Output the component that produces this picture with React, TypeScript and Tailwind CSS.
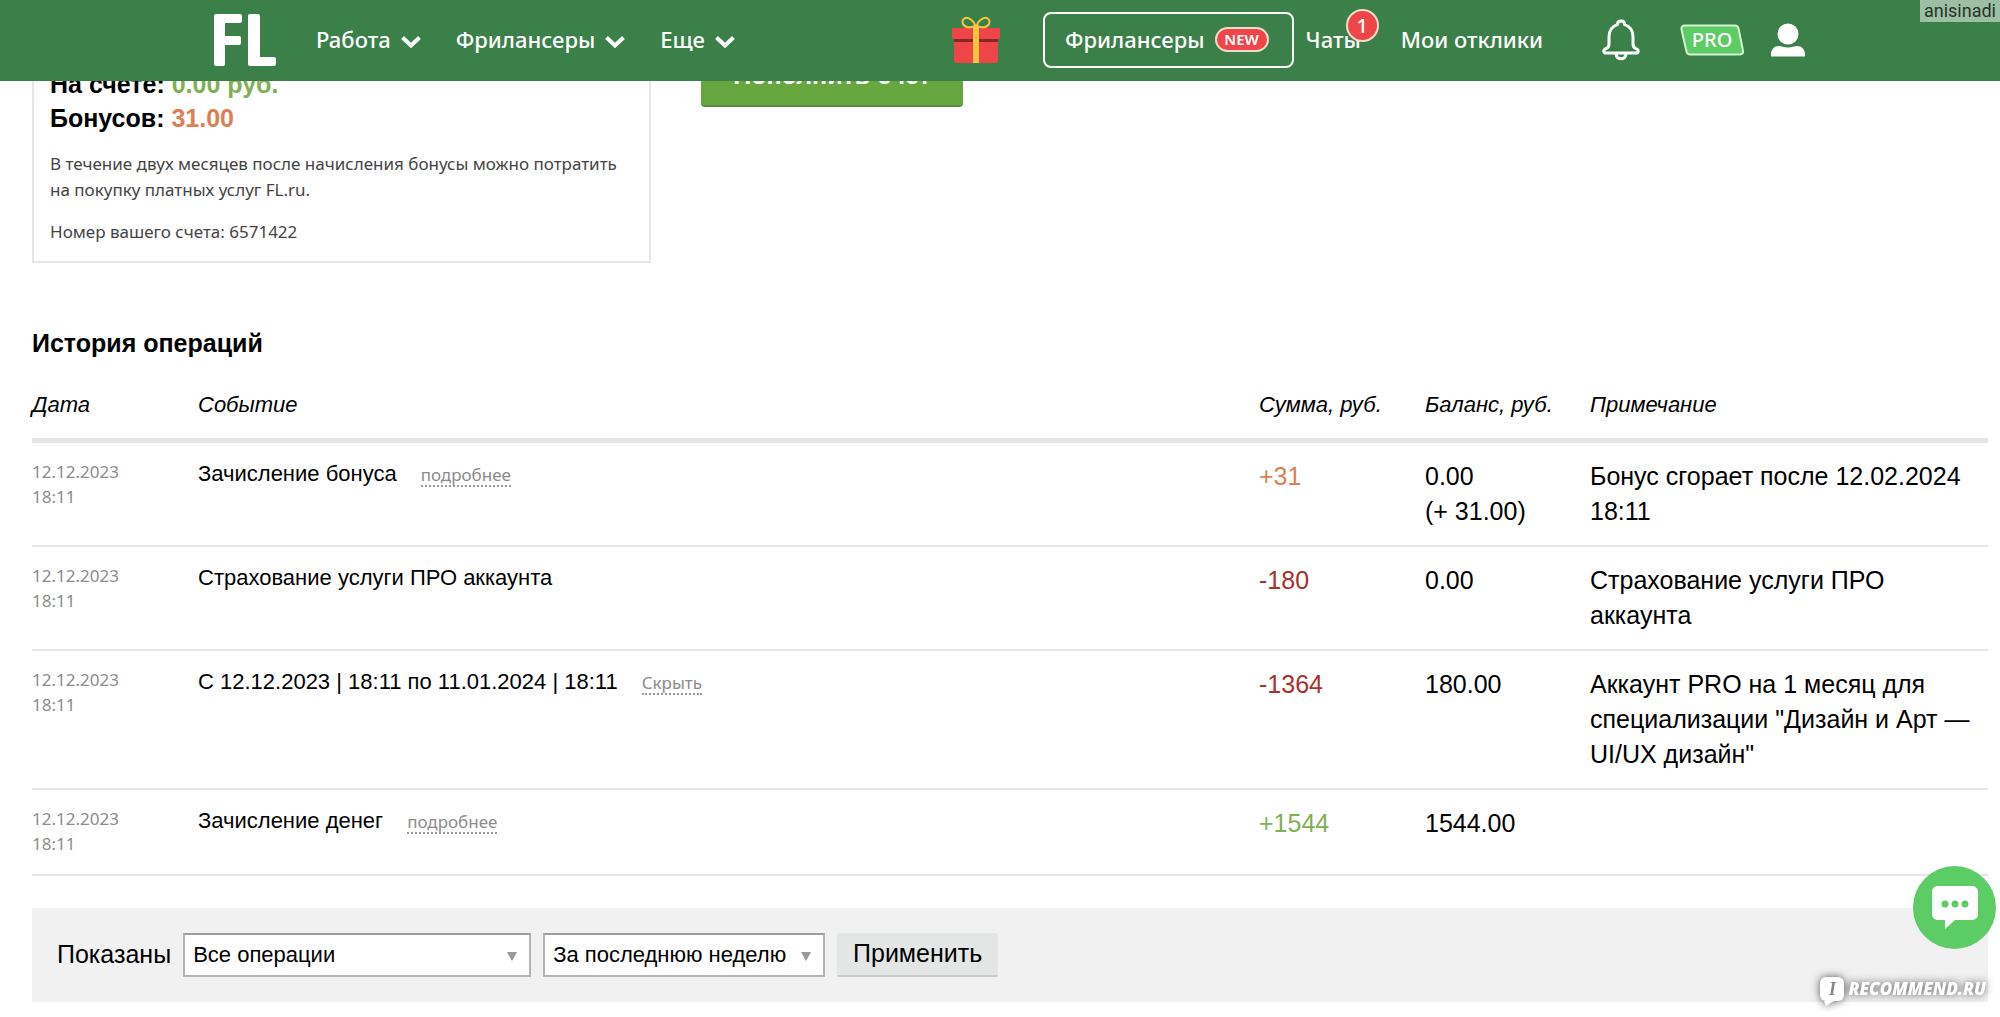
const navItems = ["Работа", "Фрилансеры", "Еще"];

const arial = "font-['Liberation_Sans',Arial,sans-serif]";
const tahoma = "font-['Noto_Sans',Tahoma,sans-serif]";
const fira = "font-['Noto_Sans',sans-serif]";

interface Operation {
  event: string;
  toggle?: string;
  sum: string;
  sumColor: string;
  balance: string[];
  note: string;
}

const operations: Operation[] = [
  {
    event: "Зачисление бонуса",
    toggle: "подробнее",
    sum: "+31",
    sumColor: "text-[#dd7f52]",
    balance: ["0.00", "(+ 31.00)"],
    note: "Бонус сгорает после 12.02.2024 18:11",
  },
  {
    event: "Страхование услуги ПРО аккаунта",
    sum: "-180",
    sumColor: "text-[#a6322c]",
    balance: ["0.00"],
    note: "Страхование услуги ПРО аккаунта",
  },
  {
    event: "С 12.12.2023 | 18:11 по 11.01.2024 | 18:11",
    toggle: "Скрыть",
    sum: "-1364",
    sumColor: "text-[#a6322c]",
    balance: ["180.00"],
    note: 'Аккаунт PRO на 1 месяц для специализации "Дизайн и Арт — UI/UX дизайн"',
  },
  {
    event: "Зачисление денег",
    toggle: "подробнее",
    sum: "+1544",
    sumColor: "text-[#7fb052]",
    balance: ["1544.00"],
    note: "",
  },
];

function Logo() {
  return (
    <svg width="62" height="52" viewBox="0 0 62 52" fill="#fff" aria-hidden="true">
      <path d="M2 0h24q2 0 2 2v5q0 2-2 2H11v13h14q2 0 2 2v5q0 2-2 2H11v19q0 2-2 2H2q-2 0-2-2V2q0-2 2-2z" />
      <path d="M36 0h8q2 0 2 2v41h14q2 0 2 2v5q0 2-2 2H36q-2 0-2-2V2q0-2 2-2z" />
    </svg>
  );
}

function ChevronIcon() {
  return (
    <svg width="20" height="12" viewBox="0 0 20 12" fill="none" stroke="#fff" strokeWidth="4" className="mt-1" aria-hidden="true">
      <path d="M1.500 1.500L10 9.500l8.500-8" />
    </svg>
  );
}

function GiftIcon() {
  return (
    <svg width="50" height="48" viewBox="0 0 50 48" fill="none" aria-hidden="true">
      <rect x="3" y="20" width="44" height="27" rx="2" fill="#ee4549" />
      <rect x="3" y="23" width="44" height="3" fill="#872523" />
      <rect x="1" y="12" width="48" height="11" rx="1" fill="#ee4549" />
      <path d="M22 11q0-3 3-3t3 3v36h-6z" fill="#f5c542" />
      <path d="M24 10C20 12 14 12 12 8c-2-5 3-8 7-5 3 2 5 5 5 7zM26 10c4 2 10 2 12-2 2-5-3-8-7-5-3 2-5 5-5 7z" stroke="#f5c542" strokeWidth="2" />
    </svg>
  );
}

function BellIcon() {
  return (
    <svg width="38" height="42" viewBox="0 0 38 42" fill="none" stroke="#fff" strokeWidth="3" strokeLinejoin="round" aria-hidden="true">
      <path d="M19 2c-2.200 0-3.600 1.500-3.600 3.600C10 7.300 7 12 7 18v7c0 2.500-.8 3.700-3 4.700-3 1.300-2.900 4.300.2 4.300h29.600c3.100 0 3.200-3 .2-4.300-2.200-1-3-2.200-3-4.700v-7c0-6-3-10.700-8.400-12.400C22.600 3.500 21.200 2 19 2z" />
      <path d="M14 35c.4 2.800 2.400 4.800 5 4.800s4.600-2 5-4.800" />
    </svg>
  );
}

function UserIcon() {
  return (
    <svg width="34" height="34" viewBox="0 0 34 34" fill="#fff" aria-hidden="true">
      <circle cx="17" cy="11" r="10.500" />
      <path d="M0 33.500V31c0-4.500 3.500-8 8-8 2.500 0 5 1.500 9 1.500s6.500-1.500 9-1.500c4.500 0 8 3.500 8 8v2.500z" />
    </svg>
  );
}

function ChatIcon() {
  return (
    <svg width="46" height="44" viewBox="0 0 46 44" aria-hidden="true">
      <path d="M6 0h34c3.500 0 6 2.500 6 6v22c0 3.500-2.500 6-6 6H23L13 43V34H6c-3.500 0-6-2.500-6-6V6c0-3.500 2.500-6 6-6z" fill="#fff" />
      <circle cx="13" cy="18" r="3.500" fill="#5ccc65" />
      <circle cx="23" cy="18" r="3.500" fill="#5ccc65" />
      <circle cx="33" cy="18" r="3.500" fill="#5ccc65" />
    </svg>
  );
}

function Header() {
  return (
    <header className={`${fira} relative z-10 flex h-[81px] items-center bg-[#3b8049] pb-[2px] pl-[214px] text-[22px] font-medium text-white`}>
      <a href="#" aria-label="FL">
        <Logo />
      </a>
      <nav className="ml-10 flex items-center gap-[35px]">
        {navItems.map((item) => (
          <button key={item} className="flex items-center gap-2.5">
            {item}
            <ChevronIcon />
          </button>
        ))}
      </nav>
      <a href="#" className="ml-[216px]" aria-label="Подарок">
        <GiftIcon />
      </a>
      <a href="#" className="ml-[42px] flex h-14 items-center gap-2.5 rounded-lg border-2 border-white pr-[23px] pl-5">
        Фрилансеры
        <span className="w-[54px] rounded-full border-2 border-[#f3dccb] bg-[#ee4549] text-center text-[15px] leading-[21px] font-semibold">NEW</span>
      </a>
      <a href="#" className="relative ml-3">
        Чаты
        <span className="absolute -top-3.5 -right-[18px] flex size-[33px] items-center justify-center rounded-full border-2 border-[#f3dccb] bg-[#ee4549] text-[20px]">1</span>
      </a>
      <a href="#" className="ml-10">Мои отклики</a>
      <button className="ml-[59px]" aria-label="Уведомления">
        <BellIcon />
      </button>
      <a href="#" className="relative ml-10 flex h-8 w-16 items-center justify-center text-[20px]">
        <svg className="absolute inset-0" width="64" height="32" viewBox="0 0 64 32" aria-hidden="true">
          <path d="M5 1.500h50c2 0 3 1 3.500 3l4.500 22c.5 2.500-.8 4-3 4H10c-2 0-3-1-3.500-3L1.500 5.500C1 3 2.500 1.500 5 1.500z" fill="#5ccc65" stroke="#d5f3d3" strokeWidth="2" />
        </svg>
        <span className="relative">PRO</span>
      </a>
      <button className="ml-[27px]" aria-label="Профиль">
        <UserIcon />
      </button>
      <span className="absolute top-0 right-0 bg-white/50 px-1 font-['Roboto',sans-serif] text-[18px] leading-[22px] font-normal text-[#26332a]">
        anisinadi
      </span>
    </header>
  );
}

function Select({ label, value, width }: { label: string; value: string; width: string }) {
  return (
    <div className={`relative ${width}`}>
      <select
        aria-label={label}
        defaultValue={value}
        className="h-11 w-full appearance-none border-2 border-[#b4b4b4] border-t-[#9c9c9c] bg-white px-2 text-[22px] leading-[28px] text-black"
      >
        <option>{value}</option>
      </select>
      <svg className="pointer-events-none absolute top-[19px] right-3.5" width="10" height="9" viewBox="0 0 10 9" aria-hidden="true">
        <path d="M0 0h10L5 9z" fill="#999" />
      </svg>
    </div>
  );
}

function Watermark() {
  return (
    <div className="absolute right-[14px] bottom-[14px] flex items-center gap-1 font-['Open_Sans',sans-serif] text-[17px] leading-[28px] font-extrabold text-white italic drop-shadow-[0_0_4px_#555]">
      <span className="relative flex size-6 items-center justify-center rounded-md bg-white font-['Liberation_Serif',serif] text-[18px] text-[#888]">
        I
        <svg className="absolute top-full left-1" width="10" height="5" viewBox="0 0 10 5" aria-hidden="true">
          <path d="M0 0h10L2 5z" fill="#fff" />
        </svg>
      </span>
      RECOMMEND.RU
    </div>
  );
}

export default function App() {
  return (
    <div className={`${arial} relative min-h-screen bg-white text-black`}>
      <Header />

      <main className="pr-3 pl-8">
        <div className="flex items-start gap-[50px]">
          <section className="-mt-4 w-[619px] border-2 border-[#e6e6e6] px-4 pb-4">
            <div className="text-[25px] leading-[34px] font-bold">
              <p>
                На счете: <span className="text-[#7fb052]">0.00 руб.</span>
              </p>
              <p>
                Бонусов: <span className="text-[#dd7f52]">31.00</span>
              </p>
            </div>
            <div className={`${tahoma} mt-4 text-[17px] leading-[26px] text-[#444]`}>
              <p>
                В течение двух месяцев после начисления бонусы можно потратить на покупку платных услуг FL.ru.
              </p>
              <p className="mt-4">Номер вашего счета: 6571422</p>
            </div>
          </section>
          <button className="-mt-7 h-[54px] w-[262px] rounded-sm border-b-2 border-[#54913a] bg-[#66a73f] pb-1.5 text-[25px] font-bold text-white">
            Пополнить счет
          </button>
        </div>

        <h2 className="mt-16 text-[25px] leading-[32px] font-bold">История операций</h2>

        <table className="mt-3 w-full table-fixed text-left text-[25px] leading-[35px]">
          <colgroup>
            <col className="w-[166px]" />
            <col />
            <col className="w-[166px]" />
            <col className="w-[165px]" />
            <col className="w-[398px]" />
          </colgroup>
          <thead>
            <tr className="border-b-[5px] border-[#e4e4e4] text-[22px] italic">
              <th className="py-4 font-normal">Дата</th>
              <th className="font-normal">Событие</th>
              <th className="font-normal">Сумма, руб.</th>
              <th className="font-normal">Баланс, руб.</th>
              <th className="font-normal">Примечание</th>
            </tr>
          </thead>
          <tbody>
            {operations.map((op) => (
              <tr key={op.event} className="border-b-2 border-[#e6e6e6] align-top">
                <td className={`${tahoma} pt-4 pb-[18px] text-[17px] leading-[25px] text-[#8c8c8c]`}>
                  12.12.2023
                  <br />
                  18:11
                </td>
                <td className="pt-4 text-[22px] leading-[30px]">
                  {op.event}
                  {op.toggle && (
                    <button className={`${tahoma} ml-6 border-b-2 border-dotted border-[#999] text-[17px] leading-[20px] text-[#8c8c8c]`}>
                      {op.toggle}
                    </button>
                  )}
                </td>
                <td className={`py-4 ${op.sumColor}`}>{op.sum}</td>
                <td className="py-4">
                  {op.balance.map((line) => (
                    <div key={line}>{line}</div>
                  ))}
                </td>
                <td className="py-4">{op.note}</td>
              </tr>
            ))}
          </tbody>
        </table>

        <form className="mt-8 flex h-[94px] items-center gap-3 bg-[#f1f1f1] pl-[25px] text-[25px]" onSubmit={(e) => e.preventDefault()}>
          <span>Показаны</span>
          <Select label="Тип операций" value="Все операции" width="w-[348px]" />
          <Select label="Период" value="За последнюю неделю" width="w-[282px]" />
          <button className="h-11 w-[161px] rounded-xs border-b-2 border-[#c8c9c8] bg-[#e4e6e5]">Применить</button>
        </form>
      </main>

      <button className="absolute right-1 bottom-[68px] flex size-[83px] items-center justify-center rounded-full bg-[#5ccc65]" aria-label="Чат поддержки">
        <ChatIcon />
      </button>
      <Watermark />
    </div>
  );
}
